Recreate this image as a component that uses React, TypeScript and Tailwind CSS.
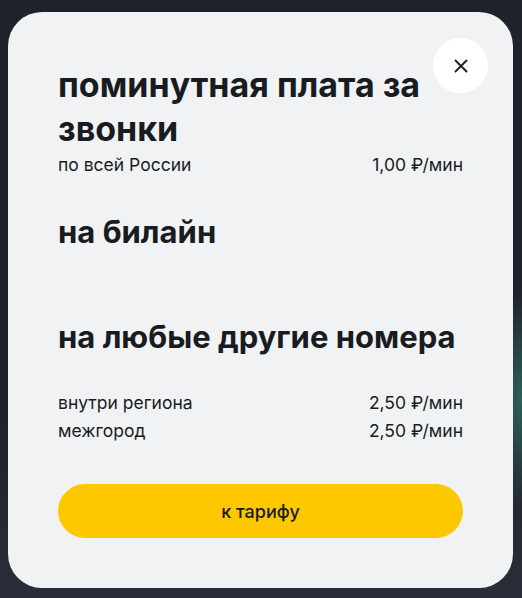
import React from "react";

export default function App() {
  return (
    <div
      className="w-[522px] h-[598px] bg-[#1e222b] bg-[radial-gradient(ellipse_40px_110px_at_522px_400px,#2f6058,transparent),linear-gradient(to_bottom,#1e222b_70%,#2a2e38)] pt-[12px] pl-[8px] overflow-hidden"
      style={{ fontFamily: "Inter, 'Noto Sans', sans-serif" }}
    >
      <div className="relative w-[505px] h-[576px] rounded-[34px] bg-[#f0f2f4] pl-[50px] pr-[50px] pt-[51px] text-[#191c1f]">
        <button className="absolute right-[25px] top-[26px] w-[55px] h-[55px] rounded-full bg-white flex items-center justify-center">
          <svg width="14" height="14" viewBox="0 0 14 14" fill="none">
            <path d="M1.5 1.5L12.5 12.5M12.5 1.5L1.5 12.5" stroke="#1f232b" strokeWidth="2" strokeLinecap="round" />
          </svg>
        </button>
        <h1 className="text-[34px] leading-[44px] font-bold w-[380px]">
          поминутная плата за звонки
        </h1>
        <div className="flex justify-between text-[17.5px] leading-[24px] mt-[2px]">
          <span>по всей России</span>
          <span>1,00 ₽/мин</span>
        </div>
        <h2 className="text-[31px] leading-[44px] font-bold mt-[33px]">на билайн</h2>
        <h2 className="text-[31px] leading-[44px] font-bold mt-[61px]">на любые другие номера</h2>
        <div className="mt-[30px] text-[17.5px] leading-[28px]">
          <div className="flex justify-between">
            <span>внутри региона</span>
            <span>2,50 ₽/мин</span>
          </div>
          <div className="flex justify-between">
            <span>межгород</span>
            <span>2,50 ₽/мин</span>
          </div>
        </div>
        <button className="mt-[39px] w-full h-[54px] rounded-full bg-[#fdc800] text-[18px] font-medium text-[#191c1f]">
          к тарифу
        </button>
      </div>
    </div>
  );
}
